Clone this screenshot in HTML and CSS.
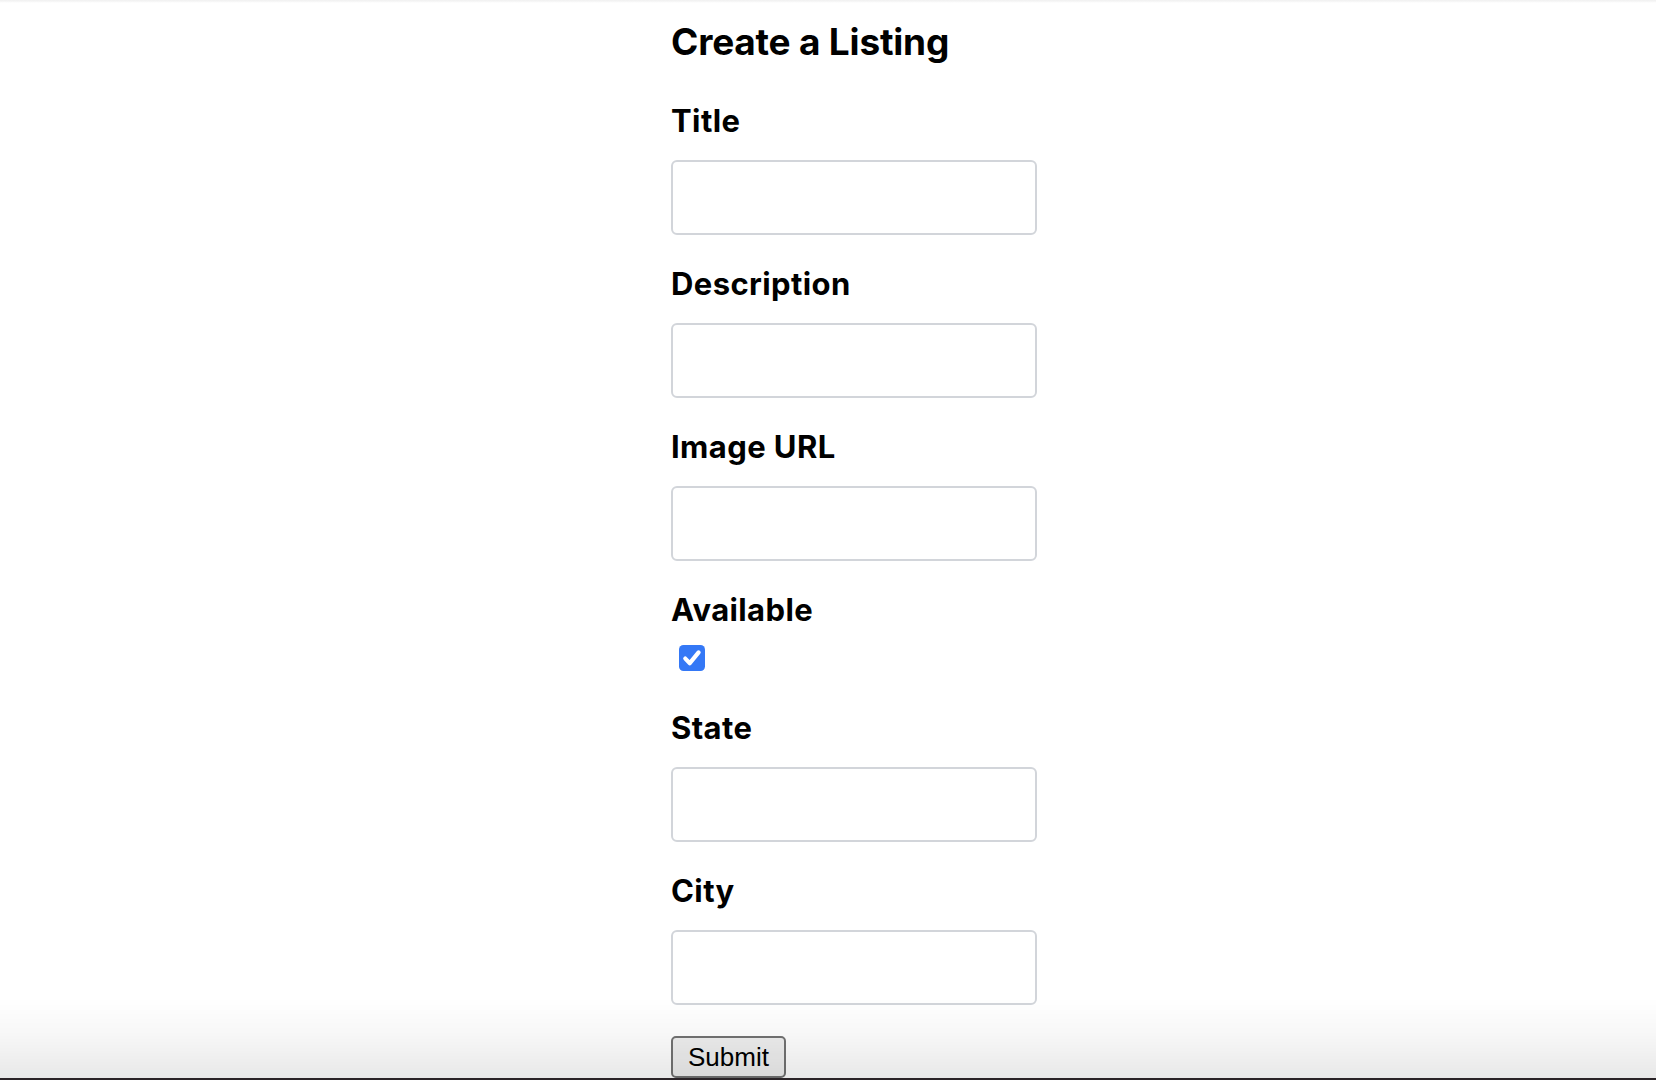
FILE: index.html
```html
<!DOCTYPE html>
<html lang="en">
<head>
<meta charset="utf-8">
<title>Create a Listing</title>
<link rel="stylesheet" href="styles.css">
</head>
<body>
<main class="page">
  <form class="listing-form">
    <h1 class="form-title">Create a Listing</h1>
    <div class="fields">
      <div class="field">
        <label class="field-label" for="title">Title</label>
        <input class="text-input" id="title" type="text">
      </div>
      <div class="field">
        <label class="field-label" for="description">Description</label>
        <input class="text-input" id="description" type="text">
      </div>
      <div class="field">
        <label class="field-label" for="image">Image URL</label>
        <input class="text-input" id="image" type="text">
      </div>
      <div class="field field-check">
        <label class="field-label" for="available">Available</label>
        <span class="checkbox" id="available" role="checkbox" aria-checked="true">
          <svg viewBox="0 0 26 26" width="26" height="26" aria-hidden="true">
            <rect x="0" y="0" width="26" height="26" rx="4.5" fill="#3478f6"/>
            <polyline points="6.3,13.6 10.8,18.2 19.6,7.4" fill="none" stroke="#ffffff" stroke-width="4.2" stroke-linecap="round" stroke-linejoin="round"/>
          </svg>
        </span>
      </div>
      <div class="field field-after-check">
        <label class="field-label" for="state">State</label>
        <input class="text-input" id="state" type="text">
      </div>
      <div class="field">
        <label class="field-label" for="city">City</label>
        <input class="text-input" id="city" type="text">
      </div>
      <div class="actions">
        <button class="submit-btn" type="submit">Submit</button>
      </div>
    </div>
  </form>
</main>
<div class="screen-top" aria-hidden="true"></div>
<div class="screen-bottom" aria-hidden="true"></div>
</body>
</html>
```
FILE: styles.css
```css
html, body {
  margin: 0;
  padding: 0;
  background: #ffffff;
}

body {
  font-family: Inter, "Noto Sans", "Liberation Sans", sans-serif;
  color: #000000;
  height: 1080px;
  overflow: hidden;
}

.page {
  padding: 20px 0 0 671px;
}

.listing-form {
  width: 366px;
}

.form-title {
  margin: 0;
  font-size: 37px;
  line-height: 44px;
  font-weight: 700;
  letter-spacing: -0.2px;
}

.fields {
  display: flex;
  flex-direction: column;
  gap: 31px;
  margin-top: 39px;
}

.field {
  display: flex;
  flex-direction: column;
  gap: 21px;
}

.field-check {
  gap: 17px;
  margin-bottom: 2px;
}

.field-after-check {
  margin-top: 6px;
}

.field-label {
  display: block;
  font-size: 31px;
  line-height: 36px;
  font-weight: 700;
  letter-spacing: 0.4px;
}

.text-input {
  box-sizing: border-box;
  width: 366px;
  height: 75px;
  margin: 0;
  padding: 0 14px;
  border: 2px solid #d2d5da;
  border-radius: 6px;
  background: #ffffff;
  font-family: inherit;
  font-size: 26px;
  outline: none;
}

.checkbox {
  display: block;
  width: 26px;
  height: 26px;
  margin-left: 8px;
}

.checkbox svg {
  display: block;
}

.actions {
  display: flex;
}

.submit-btn {
  box-sizing: border-box;
  width: 115px;
  height: 42px;
  margin: 0;
  padding: 0 14px;
  border: 2px solid #737373;
  border-radius: 5px;
  background: #efefef;
  color: #000000;
  font-family: "Liberation Sans", Arial, sans-serif;
  font-size: 26px;
  line-height: 36px;
  text-align: center;
}

.screen-top {
  position: fixed;
  top: 0;
  left: 0;
  right: 0;
  height: 3px;
  background: linear-gradient(#efefef, rgba(255, 255, 255, 0));
  pointer-events: none;
}

.screen-bottom {
  position: fixed;
  left: 0;
  right: 0;
  bottom: 0;
  height: 82px;
  background: linear-gradient(rgba(0, 0, 0, 0) 0%, rgba(0, 0, 0, 0.03) 45%, rgba(0, 0, 0, 0.09) 97%, #2a2327 97.5%, #2a2327 100%);
  pointer-events: none;
}
```
